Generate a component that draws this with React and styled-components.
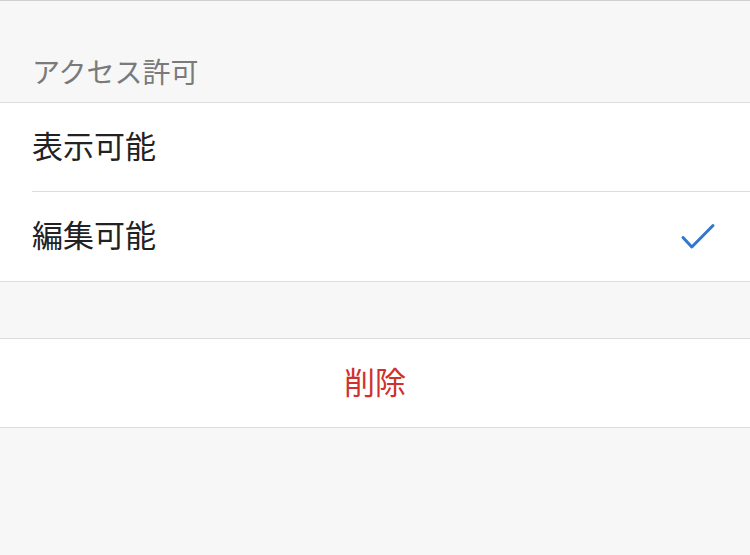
import React, { useState } from 'react'
import styled, { createGlobalStyle } from 'styled-components'

const GlobalStyle = createGlobalStyle`
  html, body {
    margin: 0;
    padding: 0;
    background: #f7f7f7;
  }
  body {
    font-family: "Noto Sans CJK JP", "Noto Sans", sans-serif;
  }
`

const Screen = styled.div`
  width: 750px;
  height: 555px;
  background: #f7f7f7;
  border-top: 1px solid #d0d0d0;
  box-sizing: border-box;
`

const SectionHeader = styled.div`
  padding: 45px 32px 0;
  height: 101px;
  box-sizing: border-box;
  font-size: 28px;
  line-height: 50px;
  color: #7a7a7a;
`

const Group = styled.div`
  background: #fff;
  border-top: 1px solid #dcdcdc;
  border-bottom: 1px solid #dcdcdc;
  margin-top: ${props => props.gap || 0}px;
`

const Row = styled.div`
  display: flex;
  align-items: center;
  height: 88px;
  margin-left: 32px;
  padding-right: 34px;
  font-size: 31px;
  color: #222;
  cursor: pointer;

  & + & {
    border-top: 1px solid #dcdcdc;
    height: 89px;
  }
`

const Label = styled.span`
  flex: 1;
  padding-bottom: 6px;
`

const DeleteButton = styled.div`
  height: 88px;
  padding-bottom: 6px;
  box-sizing: border-box;
  display: flex;
  align-items: center;
  justify-content: center;
  font-size: 31px;
  color: #d0312d;
  cursor: pointer;
`

const Check = () => (
  <svg width="36" height="28" viewBox="0 0 36 28">
    <polyline
      points="3,14.5 11.8,24 33,2.5"
      fill="none"
      stroke="#2f77cf"
      strokeWidth="3"
      strokeLinecap="round"
      strokeLinejoin="round"
    />
  </svg>
)

const options = ['表示可能', '編集可能']

const App = () => {
  const [selected, setSelected] = useState('編集可能')

  return (
    <Screen>
      <GlobalStyle />
      <SectionHeader>アクセス許可</SectionHeader>
      <Group>
        {options.map(option => (
          <Row key={option} onClick={() => setSelected(option)}>
            <Label>{option}</Label>
            {selected === option && <Check />}
          </Row>
        ))}
      </Group>
      <Group gap={56}>
        <DeleteButton>削除</DeleteButton>
      </Group>
    </Screen>
  )
}

export default App
